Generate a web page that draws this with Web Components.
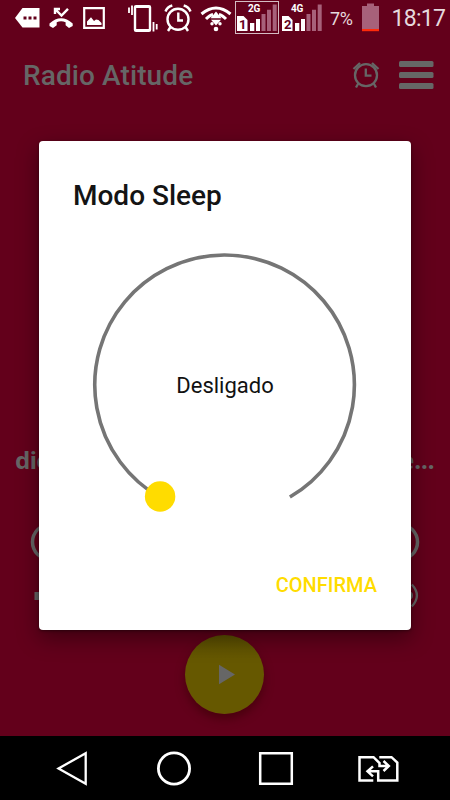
<!DOCTYPE html>
<html lang="pt">
<head>
<meta charset="utf-8">
<title>Radio Atitude</title>
<style>
html,body{margin:0;height:100%;background:#000}
body{font-family:Roboto,"Noto Sans",sans-serif}
</style>
</head>
<body>
<radio-screen></radio-screen>
<script>
const define = (name, html) => customElements.define(name, class extends HTMLElement {
  constructor() {
    super();
    const t = document.createElement('template');
    t.innerHTML = html;
    this.attachShadow({mode: 'open'}).append(t.content.cloneNode(true));
  }
});

// Draws an icon from shared coordinates: box="x y width height"
const icons = {
  message: '<path d="M15 18L22.5 8H39.5V27.5H22.5Z" fill="#fff"/><path d="M23.5 16.5h3v3h-3zM28.5 16.5h3v3h-3zM33.5 16.5h3v3h-3z" fill="#63001b"/>',
  missed: '<path d="M49.5 23.5Q61 13 72.7 23.5V26L69 28L65.6 25.3V22.2Q61 20.4 56.7 22.2V25.3L53 28L49.5 26Z" fill="#fff"/><path d="M55 14V9H60M55.5 9.5L61.5 15.5L68 8.8" fill="none" stroke="#fff" stroke-width="2.4"/>',
  image: '<path d="M84.2 8.2H103.8V27.8H84.2Z" fill="none" stroke="#fff" stroke-width="2.2"/><path d="M87 25V21.5L91 17.3L94 21L96 19.4L98.5 20L101.5 23V25Z" fill="#fff"/>',
  vibrate: '<rect x="135" y="6.2" width="15" height="24.6" rx="1" fill="none" stroke="#fff" stroke-width="2.4"/><path d="M135 7.2H150M135 29.800H150" stroke="#fff" stroke-width="1.500"/><path d="M132 5.500V15M129 7.500V13M153.500 22V31.500M156.700 24V29.500" stroke="#fff" stroke-width="1.800" fill="none"/>',
  alarm: '<g fill="none" stroke="#fff" stroke-width="2.400"><circle cx="178" cy="19.300" r="10.500"/><path d="M178.300 12.500V20.500H183M165.500 11.500Q167 7 172.300 5.500M190.500 11.500Q189 7 183.700 5.500M170.500 27L168 31M185.500 27L188 31"/></g>',
  wifi: '<g fill="none" stroke="#fff" stroke-width="3"><path d="M201.500 14Q216 2 230.500 14M206 19Q210 15 213 14.500M226 19Q222 15 219 14.500"/></g><path d="M216 11.500L221.500 18.300H210.500ZM211 19.700H221L216 25.500Z" fill="#fff"/><circle cx="212" cy="23.800" r="1.700" fill="#fff"/><circle cx="220" cy="23.800" r="1.700" fill="#fff"/><circle cx="216" cy="29" r="2.300" fill="#fff"/>',
  bars: '<path d="M250 23h4.300v8H250zM256 19h4v12h-4z" fill="#fff"/><path d="M261.500 14h4v17h-4zM267 9.700h4V31h-4zM272.700 4.500h4V31h-4z" fill="#a7617a"/><path d="M237 16H243.500L247.500 20V31H237Z" fill="#fff"/>',
  battery: '<path d="M362 6H367V3.500H374V6H379V29H362Z" fill="#a7617a"/><path d="M362 29H379V31.200H362Z" fill="#ff2a0a"/>',
  timer: '<g fill="none" stroke="#666" stroke-width="2.300"><circle cx="366" cy="75.200" r="11"/><path d="M365.800 68.500V75.600H371.500M353.500 69L360 63M378.500 69L372 63M358.500 83L356 87.500M373.500 83L376 87.500"/></g>',
  menu: '<g fill="#666"><rect x="399" y="61" width="34.500" height="6" rx="1.500"/><rect x="399" y="72" width="34.500" height="6" rx="1.500"/><rect x="399" y="83" width="34.500" height="6" rx="1.500"/></g>',
  ringLeft: '<circle cx="50" cy="542" r="17.500" fill="none" stroke="#666" stroke-width="3.500"/>',
  ringRight: '<circle cx="400" cy="542" r="17.500" fill="none" stroke="#666" stroke-width="3.500"/>',
  minus: '<path d="M34.500 592H50V600H34.500Z" fill="#666"/>',
  volume: '<g fill="none" stroke="#666" stroke-width="2.300"><path d="M411.800 584.500Q422 595.500 411.800 606.500"/></g><circle cx="409" cy="595.500" r="4" fill="#666"/>',
  play: '<path d="M219 664.700L235 674.500L219 684.300Z" fill="#666"/>',
  back: '<path d="M58.500 768.500L85.700 753.200V783.800Z" fill="none" stroke="#fff" stroke-width="2.300"/>',
  home: '<circle cx="174" cy="768.500" r="15.600" fill="none" stroke="#fff" stroke-width="2.800"/>',
  recent: '<path d="M260.200 753.200H291.800V783.800H260.200Z" fill="none" stroke="#fff" stroke-width="2.500"/>',
  swap: '<g fill="none" stroke="#fff" stroke-width="2.500"><path d="M373.300 780.500H359.500V757.200H373.500L379.500 763V766H389M383.500 761L388.800 766L383.500 771"/><path d="M379.300 757.200H391.500L397.300 762.500V780.500H378.200V771.300H368M373 766.300L367.500 771.300L373 776.300"/></g>'
};
customElements.define('ui-icon', class extends HTMLElement {
  connectedCallback() {
    const b = this.getAttribute('box'), [, , w, h] = b.split(' ');
    if (!this.shadowRoot) this.attachShadow({mode: 'open'});
    this.shadowRoot.innerHTML = `<style>:host{display:block;flex:none;width:${w}px;height:${h}px}svg{display:block}</style>
      <svg width="${w}" height="${h}" viewBox="${b}">${icons[this.getAttribute('name')]}</svg>`;
  }
});

define('sim-signal', `<style>
:host{display:block;flex:none;position:relative;width:44px;height:36px;color:#fff}
:host([active])::before{content:"";position:absolute;left:0;top:1px;width:44px;height:33px;box-sizing:border-box;border:1.5px solid #d5bcc3}
span,b{position:absolute;line-height:1}
span{left:var(--label-x,13px);top:4px;font-size:10px;font-weight:700;letter-spacing:-.2px}
b{left:4px;top:18px;font-size:13px;color:#63001b;font-weight:700}
</style><ui-icon name="bars" box="235 0 44 36"></ui-icon><span><slot></slot></span><b><slot name="n"></slot></b>`);

define('status-bar', `<style>
:host{display:flex;height:36px;padding-left:15px;color:#e6d9dd}
.pct{width:32px;font-size:18px;line-height:38px;padding-left:4px;box-sizing:border-box;letter-spacing:-.3px}
.time{font-size:23px;line-height:38px;padding-left:11.5px;letter-spacing:-.7px}
.g1{margin-left:9px}.g2{margin-left:22px}.g3{margin-left:5px}.g4{margin-left:7px}
</style>
<ui-icon name="message" box="15 0 25 36"></ui-icon>
<ui-icon class="g1" name="missed" box="49 0 25 36"></ui-icon>
<ui-icon class="g1" name="image" box="83 0 23 36"></ui-icon>
<ui-icon class="g2" name="vibrate" box="128 0 31 36"></ui-icon>
<ui-icon class="g3" name="alarm" box="164 0 29 36"></ui-icon>
<ui-icon class="g4" name="wifi" box="200 0 32 36"></ui-icon>
<sim-signal active style="margin-left:3px">2G<i slot="n" style="font-style:normal">1</i></sim-signal>
<sim-signal style="margin-left:1px;--label-x:11px">4G<i slot="n" style="font-style:normal">2</i></sim-signal>
<span class="pct" style="margin-left:2px">7%</span>
<ui-icon style="margin-left:4px" name="battery" box="362 0 18 36"></ui-icon>
<span class="time">18:17</span>`);

define('app-bar', `<style>
:host{display:flex;align-items:center;height:80px;padding:0 16px 0 23px;color:#666}
h1{flex:1;margin:0;font-size:28px;font-weight:500;line-height:80px;letter-spacing:.1px}
.menu{margin-left:18px}
</style><h1><slot></slot></h1>
<ui-icon name="timer" box="352 56 29 40"></ui-icon>
<ui-icon class="menu" name="menu" box="399 56 35 40"></ui-icon>`);

define('player-panel', `<style>
:host{display:flex;flex-direction:column;flex:1;color:#666;padding-top:326px}
.row{display:flex;justify-content:space-between;align-items:center}
.song{height:34px;margin-bottom:2px;padding:0 15.5px 0 15px;font:700 24px "Noto Sans",sans-serif}
.song span:first-child{letter-spacing:-.5px}
.keys{height:40px;margin-top:44px;padding:0 30px}
.vol{height:40px;margin-top:14px;padding:0 31px 0 34px}
.play{width:79px;height:79px;margin:19px 0 0 185.3px;border-radius:50%;background:linear-gradient(#5b4f00,#665800 30%);box-shadow:0 5px 10px #3008;display:grid;place-items:center}
</style>
<div class="row song"><span>dic</span><span>e...</span></div>
<div class="row keys"><ui-icon name="ringLeft" box="30 522 40 40"></ui-icon><ui-icon name="ringRight" box="380 522 40 40"></ui-icon></div>
<div class="row vol"><ui-icon name="minus" box="34 576 30 40"></ui-icon><ui-icon name="volume" box="400 576 19 40"></ui-icon></div>
<div class="play"><ui-icon name="play" box="185 635 79 79"></ui-icon></div>`);

define('nav-bar', `<style>
:host{display:flex;height:64px;background:#000;padding-left:56px}
</style>
<ui-icon name="back" box="56 736 32 64"></ui-icon>
<ui-icon style="margin-left:68px" name="home" box="156 736 36 64"></ui-icon>
<ui-icon style="margin-left:66px" name="recent" box="258 736 36 64"></ui-icon>
<ui-icon style="margin-left:63px" name="swap" box="357 736 43 64"></ui-icon>`);

define('sleep-dial', `<style>
:host{display:grid;place-items:center;width:280px;height:280px}
svg,span{grid-area:1/1}
span{font-size:22px;line-height:30px;letter-spacing:0;color:#111;padding-top:12px}
</style>
<svg width="280" height="280" viewBox="85 240 280 280"><path d="M160.100 497.500A129.800 129.800 0 1 1 289.900 497" fill="none" stroke="#757575" stroke-width="3.600"/><circle cx="160.100" cy="496.500" r="15.200" fill="#ffdc00"/></svg>
<span><slot></slot></span>`);

define('sleep-dialog', `<style>
:host{position:absolute;left:39px;top:141px;width:372px;height:489px;box-sizing:border-box;background:#fff;border-radius:4px;box-shadow:0 8px 22px #0006,0 1px 3px #0006;display:flex;flex-direction:column}
h2{margin:37px 34px 0;font-size:28px;line-height:36px;font-weight:500;color:#141414}
sleep-dial{margin:26px 0 0 46px}
button{align-self:flex-end;margin:49px 34px 0;padding:0;border:0;background:none;font:500 20px/32px Roboto,sans-serif;color:#ffdc00}
</style>
<h2><slot name="title"></slot></h2><sleep-dial><slot></slot></sleep-dial><button><slot name="action"></slot></button>`);

define('radio-screen', `<style>
:host{position:relative;display:flex;flex-direction:column;width:450px;height:800px;overflow:hidden;background:#63001b}
</style>
<status-bar></status-bar>
<app-bar>Radio Atitude</app-bar>
<player-panel></player-panel>
<nav-bar></nav-bar>
<sleep-dialog><span slot="title">Modo Sleep</span>Desligado<span slot="action">CONFIRMA</span></sleep-dialog>`);
</script>
</body>
</html>
